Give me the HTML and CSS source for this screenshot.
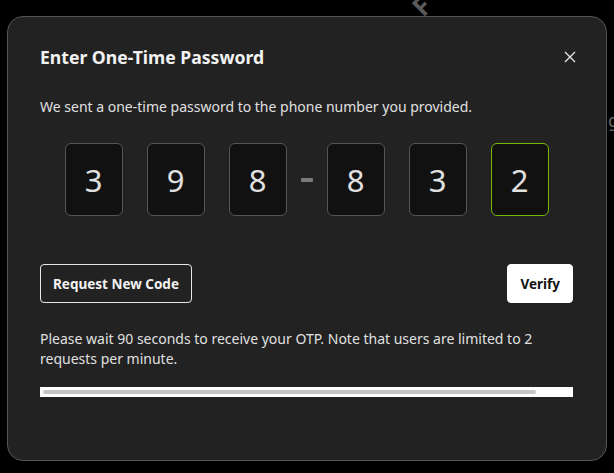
FILE: index.html
```html
<!DOCTYPE html>
<html lang="en">
<head>
    <meta charset="UTF-8">
    <meta name="viewport" content="width=device-width, initial-scale=1.0">
    <title>Enter One-Time Password</title>
    <link rel="stylesheet" href="styles.css">
</head>
<body>
    <div class="backdrop">
        <span class="bg-glyph bg-glyph-top">F</span>
        <span class="bg-glyph bg-glyph-side">g</span>

        <div class="dialog" role="dialog" aria-labelledby="otp-title">
            <div class="dialog-header">
                <h2 class="dialog-title" id="otp-title">Enter One-Time Password</h2>
                <button class="close-btn" aria-label="Close">
                    <svg width="12" height="12" viewBox="0 0 12 12">
                        <path d="M1 1 L11 11 M11 1 L1 11" stroke="#e8e8e8" stroke-width="1.3" fill="none"/>
                    </svg>
                </button>
            </div>

            <p class="dialog-text">We sent a one-time password to the phone number you provided.</p>

            <div class="otp-row">
                <div class="otp-group">
                    <div class="otp-box">3</div>
                    <div class="otp-box">9</div>
                    <div class="otp-box">8</div>
                </div>
                <div class="otp-dash"></div>
                <div class="otp-group">
                    <div class="otp-box">8</div>
                    <div class="otp-box">3</div>
                    <div class="otp-box active">2</div>
                </div>
            </div>

            <div class="dialog-actions">
                <button class="btn btn-outline">Request New Code</button>
                <button class="btn btn-solid">Verify</button>
            </div>

            <p class="dialog-note">Please wait 90 seconds to receive your OTP. Note that users are limited to 2 requests per minute.</p>

            <div class="scroll-track">
                <div class="scroll-thumb" style="width: 93.5%"></div>
            </div>
        </div>
    </div>
</body>
</html>
```

FILE: styles.css
```css
html, body {
    margin: 0;
    padding: 0;
    width: 100%;
    height: 100%;
    overflow: hidden;
    background: #000;
}

body {
    font-family: "Noto Sans", "Liberation Sans", sans-serif;
    color: #e6e6e6;
}

/* 背景层 */
.backdrop {
    position: relative;
    padding: 16px 7px 0 7px;
}

.bg-glyph {
    position: absolute;
    color: #5a5a5a;
    font-weight: 700;
    font-size: 26px;
}

.bg-glyph-top {
    left: 414px;
    top: -12px;
    transform: rotate(-45deg);
}

.bg-glyph-side {
    left: 608px;
    top: 108px;
    font-size: 18px;
    font-weight: 400;
    color: #666;
}

/* 弹窗 */
.dialog {
    position: relative;
    width: 600px;
    height: 445px;
    box-sizing: border-box;
    background: #222;
    border: 1px solid #555;
    border-radius: 16px;
    padding: 28px 33px 0 32px;
}

.dialog-header {
    display: flex;
    justify-content: space-between;
    align-items: center;
}

.dialog-title {
    margin: 0;
    font-size: 17.6px;
    font-weight: 700;
    line-height: 24px;
    color: #f2f2f2;
}

.close-btn {
    background: none;
    border: none;
    padding: 0;
    width: 12px;
    height: 12px;
    margin-right: -3px;
    cursor: pointer;
}

.close-btn svg {
    display: block;
}

.dialog-text {
    margin: 28px 0 0 0;
    font-size: 14px;
    line-height: 20px;
    color: #e0e0e0;
}

/* 验证码输入框 */
.otp-row {
    display: flex;
    justify-content: center;
    align-items: center;
    gap: 14px;
    margin-top: 26px;
}

.otp-group {
    display: flex;
    gap: 24px;
}

.otp-box {
    width: 58px;
    height: 73px;
    box-sizing: border-box;
    background: #111;
    border: 1px solid #555;
    border-radius: 6px;
    display: flex;
    align-items: center;
    justify-content: center;
    font-size: 31px;
    font-weight: 400;
    color: #e0e0e0;
}

.otp-box.active {
    border-color: #76b900;
}

.otp-dash {
    width: 12px;
    height: 4px;
    background: #7a7a7a;
    border-radius: 1px;
}

/* 按钮 */
.dialog-actions {
    display: flex;
    justify-content: space-between;
    margin-top: 48px;
}

.btn {
    height: 39px;
    box-sizing: border-box;
    border-radius: 4px;
    font-family: inherit;
    font-size: 13.5px;
    font-weight: 700;
    padding: 0 12px;
    cursor: pointer;
}

.btn-outline {
    background: transparent;
    border: 1px solid #e6e6e6;
    color: #f2f2f2;
}

.btn-solid {
    background: #fff;
    border: 1px solid #fff;
    color: #111;
}

.dialog-note {
    margin: 26px 0 0 0;
    font-size: 14px;
    line-height: 20px;
    color: #e0e0e0;
}

/* 滚动条样式 */
.scroll-track {
    margin-top: 18px;
    height: 10px;
    background: #fff;
    padding: 3px 3px;
    box-sizing: border-box;
}

.scroll-thumb {
    height: 4px;
    background: #c6c6c6;
    border-radius: 3px;
}
```
